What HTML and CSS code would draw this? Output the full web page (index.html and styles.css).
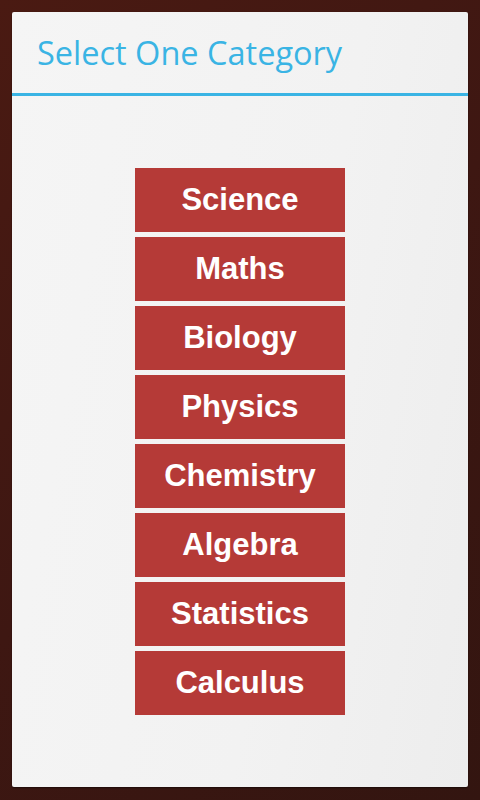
FILE: index.html
```html
<!DOCTYPE html>
<html lang="en">
  <head>
    <meta charset="UTF-8" />
    <meta name="viewport" content="width=device-width, initial-scale=1.0" />
    <title>Select One Category</title>
    <link rel="stylesheet" href="styles.css">
  </head>
  <body>
    <div id="panel">
      <div id="header">
        <h1 class="title">Select One Category</h1>
      </div>

      <!-- 分类按钮列表 -->
      <div id="categories">
        <button class="category">Science</button>
        <button class="category">Maths</button>
        <button class="category">Biology</button>
        <button class="category">Physics</button>
        <button class="category">Chemistry</button>
        <button class="category">Algebra</button>
        <button class="category">Statistics</button>
        <button class="category">Calculus</button>
      </div>
    </div>
  </body>
</html>
```

FILE: styles.css
```css
body {
  margin: 0;
  height: 800px;
  overflow: hidden;
  padding: 12px;
  box-sizing: border-box;
  background: linear-gradient(135deg, #4a1a12 0%, #3e1712 50%, #331510 100%);
}

#panel {
  height: 775px;
  border-radius: 2px;
  background: linear-gradient(100deg, #f5f5f5 0%, #f2f2f2 60%, #ededed 100%);
  box-shadow: 0 1px 2px rgba(0, 0, 0, 0.5);
}

#header {
  height: 81px;
  border-bottom: 3px solid #3ab4e4;
  display: flex;
  align-items: center;
  padding-left: 25px;
}

.title {
  margin: 0;
  font-family: "Open Sans", sans-serif;
  font-weight: 400;
  font-size: 32.5px;
  color: #3ab4e4;
}

#categories {
  display: flex;
  flex-direction: column;
  align-items: center;
  gap: 5px;
  padding-top: 72px;
}

.category {
  width: 210px;
  height: 64px;
  border: none;
  border-radius: 0;
  padding: 0;
  background-color: #b53a37;
  color: #fff;
  font-family: "Liberation Sans", Arial, sans-serif;
  font-weight: bold;
  font-size: 31px;
  cursor: pointer;
}
```
